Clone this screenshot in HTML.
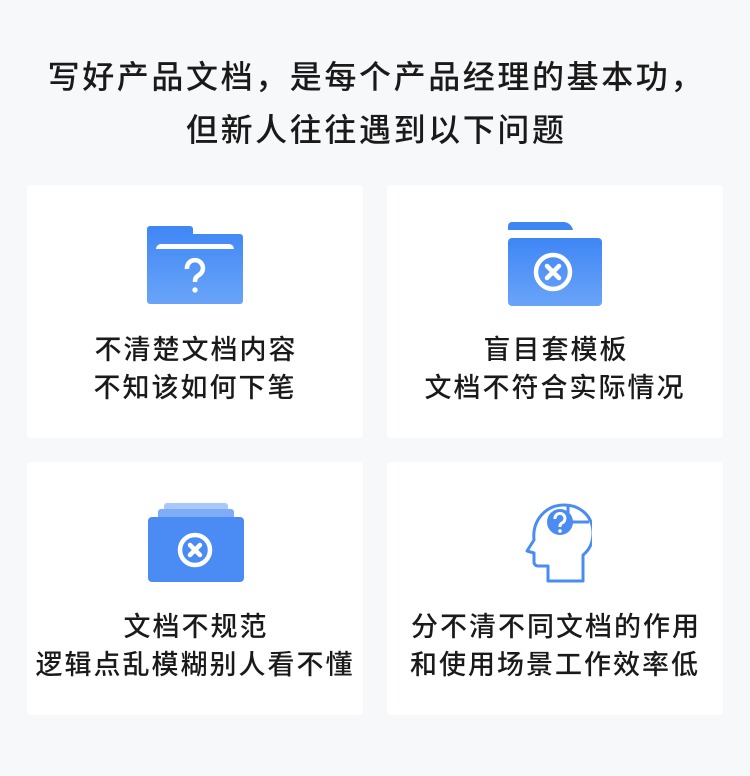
<!DOCTYPE html>
<html><head><meta charset="utf-8"><style>
body{margin:0;width:750px;height:776px;background:#f7f8fa;font-family:"Liberation Sans","Noto Sans CJK SC",sans-serif;color:#1a1a1a;position:relative;overflow:hidden}
.t{position:absolute;left:0;width:750px;text-align:center;font-size:32px;letter-spacing:2.6px;text-indent:2.6px;font-weight:500}
.c{position:absolute;width:336px;height:253px;background:#fff;border-radius:4px}
.c svg{position:absolute}
.c p{position:absolute;left:0;width:100%;margin:0;text-align:center;font-size:27px;line-height:38px;top:146px;letter-spacing:2px;text-indent:2px;font-weight:500}
</style></head><body>
<div class="t" style="top:52px">写好产品文档，是每个产品经理的基本功，</div>
<div class="t" style="top:105px">但新人往往遇到以下问题</div>

<div class="c" style="left:27px;top:185px">
<svg style="left:120px;top:41px" width="96" height="78" viewBox="0 0 96 78"><defs><linearGradient id="g" x1="0" y1="0" x2="0" y2="1"><stop offset="0" stop-color="#3f86f5"/><stop offset="1" stop-color="#69a4f8"/></linearGradient></defs>
<path d="M3 0h40a3 3 0 0 1 3 3v5h47a3 3 0 0 1 3 3v64a3 3 0 0 1-3 3H3a3 3 0 0 1-3-3V3a3 3 0 0 1 3-3z" fill="url(#g)"/>
<path d="M9 23a5 5 0 0 1 5-5h68a5 5 0 0 1 5 5z" fill="#fff"/>
<path d="M40 43a8 8 0 1 1 12 6c-3 2-4 3-4 7" stroke="#fff" stroke-width="4.5" fill="none"/><circle cx="48" cy="64" r="2.7" fill="#fff"/></svg>
<p>不清楚文档内容<br>不知该如何下笔</p></div>

<div class="c" style="left:387px;top:185px">
<svg style="left:121px;top:37px" width="94" height="84" viewBox="0 0 94 84"><defs><linearGradient id="g2" x1="0" y1="0" x2="0" y2="1"><stop offset="0" stop-color="#3f86f5"/><stop offset="1" stop-color="#69a4f8"/></linearGradient></defs>
<path d="M4 0h52a10 10 0 0 1 9 8H0V4a4 4 0 0 1 4-4z" fill="#3f86f5"/>
<rect x="0" y="16" width="94" height="68" rx="4" fill="url(#g2)"/>
<circle cx="45" cy="50" r="17" stroke="#fff" stroke-width="4.5" fill="none"/>
<path d="M39 44l12 12M51 44l-12 12" stroke="#fff" stroke-width="4.5" stroke-linecap="round"/></svg>
<p>盲目套模板<br>文档不符合实际情况</p></div>

<div class="c" style="left:27px;top:462px">
<svg style="left:121px;top:41px" width="96" height="79" viewBox="0 0 96 79">
<rect x="16" y="0" width="64" height="12" rx="3" fill="#a9c8fb"/>
<rect x="10" y="6" width="76" height="12" rx="3" fill="#7eacf7"/>
<rect x="0" y="14" width="96" height="65" rx="4" fill="#4a8cf3"/>
<circle cx="47" cy="47" r="15" stroke="#fff" stroke-width="4.5" fill="none"/>
<path d="M42 42l10 10M52 42l-10 10" stroke="#fff" stroke-width="4.5" stroke-linecap="round"/></svg>
<p>文档不规范<br>逻辑点乱模糊别人看不懂</p></div>

<div class="c" style="left:387px;top:462px">
<svg style="left:137px;top:40px" width="68" height="82" viewBox="0 0 68 82" fill="none" stroke="#4a8cf3" stroke-width="3" stroke-linejoin="round">
<path d="M24 79V64h-10a4 4 0 0 1-4-4v-9l-7-2 7-11c-2-20 12-35 30-35 17 0 29 12 29 28 0 11-5 18-10 22v26z"/>
<path d="M44 3v17h21"/>
<circle cx="36" cy="20" r="13" fill="#4a8cf3" stroke="none"/>
<path d="M31 17a5 5 0 1 1 7 4c-2 1-2 2-2 4" stroke="#fff" stroke-width="3"/><circle cx="36" cy="29" r="1.8" fill="#fff" stroke="none"/></svg>
<p>分不清不同文档的作用<br>和使用场景工作效率低</p></div>
</body></html>
